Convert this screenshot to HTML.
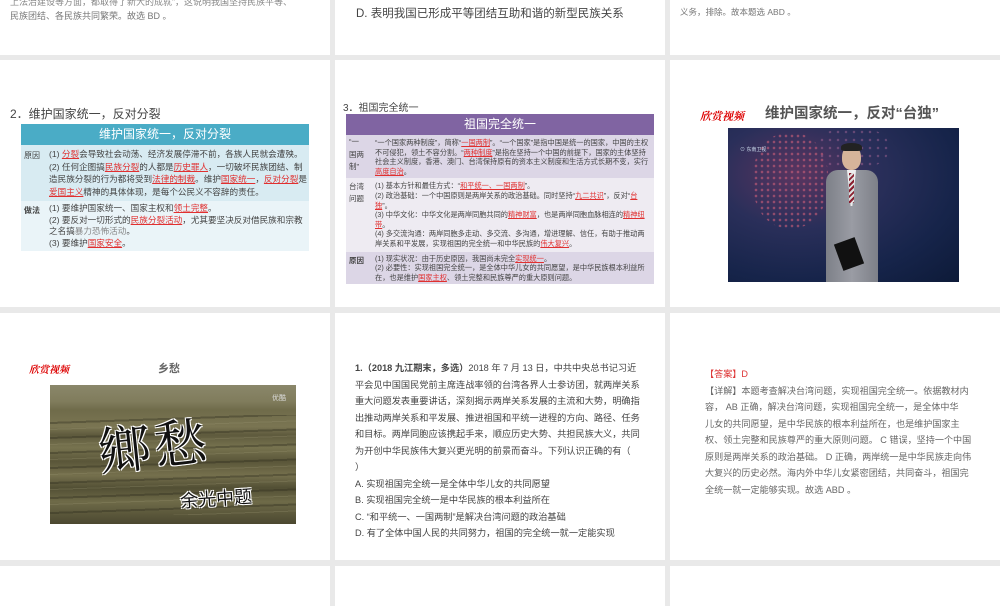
<!DOCTYPE html>
<html><head><meta charset="utf-8">
<style>
*{margin:0;padding:0;box-sizing:border-box}
body{width:1000px;height:600px;background:#e9e9e9;position:relative;overflow:hidden;font-family:"Liberation Sans","Noto Sans CJK SC",sans-serif;color:#444}
.s{position:absolute;background:#fff;overflow:hidden}
.a{position:absolute;white-space:nowrap}
.u{color:#e03030;text-decoration:underline}
table{border-collapse:collapse;width:100%}
td{vertical-align:top;color:#444;padding:1px 3px}
.red{color:#d00;font-family:"Liberation Serif","Noto Serif CJK SC",serif;font-weight:bold;font-style:italic}
</style></head><body>

<!-- row 1 -->
<div class="s" style="left:0;top:0;width:330px;height:55px">
 <div class="a" style="left:10px;top:-5px;font-size:9px;color:#888">上法治建设等方面，都取得了新大的成就”，这说明我国坚持民族平等、</div>
 <div class="a" style="left:10px;top:9px;font-size:9px;color:#777">民族团结、各民族共同繁荣。故选 BD 。</div>
</div>
<div class="s" style="left:335px;top:0;width:330px;height:55px">
 <div class="a" style="left:21px;top:5px;font-size:11.5px;color:#444">D. 表明我国已形成平等团结互助和谐的新型民族关系</div>
</div>
<div class="s" style="left:670px;top:0;width:330px;height:55px">
 <div class="a" style="left:10px;top:6px;font-size:8.5px;color:#777">义务，排除。故本题选 ABD 。</div>
</div>

<!-- row 2 col 1 -->
<div class="s" style="left:0;top:60px;width:330px;height:247px">
 <div class="a" style="left:10px;top:45px;font-size:12px;color:#444">2．维护国家统一，反对分裂</div>
 <div style="position:absolute;left:21px;top:64px;width:288px">
  <div style="background:#4aacc6;color:#fff;text-align:center;font-size:12px;height:21px;line-height:21px">维护国家统一，反对分裂</div>
  <table>
   <tr style="background:#d8ebf2"><td style="width:26px;font-size:8px;line-height:11px;padding-top:5px">原因</td><td style="font-size:8.6px;line-height:12.6px;padding:3px 2px 3px 2px">(1) <span class="u">分裂</span>会导致社会动荡、经济发展停滞不前，各族人民就会遭殃。<br>(2) 任何企图搞<span class="u">民族分裂</span>的人都是<span class="u">历史罪人</span>，一切破坏民族团结、制造民族分裂的行为都将受到<span class="u">法律的制裁</span>。维护<span class="u">国家统一</span>，<span class="u">反对分裂</span>是<span class="u">爱国主义</span>精神的具体体现，是每个公民义不容辞的责任。</td></tr>
   <tr style="background:#eaf4f8"><td style="font-weight:bold;font-size:8px;line-height:11px;padding-top:4px">做法</td><td style="font-size:8.6px;line-height:11.5px;padding:2px 2px 2px 2px">(1) 要维护国家统一、国家主权和<span class="u">领土完整</span>。<br>(2) 要反对一切形式的<span class="u">民族分裂活动</span>，尤其要坚决反对借民族和宗教之名搞<span style="color:#888">暴力恐怖活动</span>。<br>(3) 要维护<span class="u">国家安全</span>。</td></tr>
  </table>
 </div>
</div>

<!-- row 2 col 2 -->
<div class="s" style="left:335px;top:60px;width:330px;height:247px">
 <div class="a" style="left:8px;top:39px;font-size:10px;color:#444">3．祖国完全统一</div>
 <div style="position:absolute;left:11px;top:54px;width:308px">
  <div style="background:#8064a2;color:#fff;text-align:center;font-size:12px;height:21px;line-height:21px">祖国完全统一</div>
  <table>
   <tr style="background:#dcd6e6"><td style="width:26px;font-size:7.5px;line-height:12.5px">“一<br>国两<br>制”</td><td style="font-size:7.2px;line-height:9.6px;padding:3px 3px 2px">“一个国家两种制度”，简称“<span class="u">一国两制</span>”。“一个国家”是指中国是统一的国家，中国的主权不可侵犯，领土不容分割。“<span class="u">两种制度</span>”是指在坚持一个中国的前提下，国家的主体坚持社会主义制度，香港、澳门、台湾保持原有的资本主义制度和生活方式长期不变，实行<span class="u">高度自治</span>。</td></tr>
   <tr style="background:#eeebf2"><td style="font-size:7.5px;line-height:12px;padding-top:3px">台湾<br>问题</td><td style="font-size:7.2px;line-height:9.6px;padding:3px 3px 3px">(1) 基本方针和最佳方式：“<span class="u">和平统一、一国两制</span>”。<br>(2) 政治基础：一个中国原则是两岸关系的政治基础。同时坚持“<span class="u">九二共识</span>”，反对“<span class="u">台独</span>”。<br>(3) 中华文化：中华文化是两岸同胞共同的<span class="u">精神财富</span>，也是两岸同胞血脉相连的<span class="u">精神纽带</span>。<br>(4) 多交流沟通：两岸同胞多走动、多交流、多沟通，增进理解、信任，有助于推动两岸关系和平发展，实现祖国的完全统一和中华民族的<span class="u">伟大复兴</span>。</td></tr>
   <tr style="background:#dcd6e6"><td style="font-weight:bold;font-size:7.5px;padding-top:3px">原因</td><td style="font-size:7.2px;line-height:9.6px;padding:2px 3px 2px">(1) 现实状况：由于历史原因，我国尚未完全<span class="u">实现统一</span>。<br>(2) 必要性：实现祖国完全统一，是全体中华儿女的共同愿望，是中华民族根本利益所在，也是维护<span class="u">国家主权</span>、领土完整和民族尊严的重大原则问题。</td></tr>
  </table>
 </div>
</div>

<!-- row 2 col 3 -->
<div class="s" style="left:670px;top:60px;width:330px;height:247px">
 <div class="a red" style="left:30px;top:48px;font-size:11px">欣赏视频</div>
 <div class="a" style="left:95px;top:42px;font-size:14.5px;font-weight:bold;color:#555">维护国家统一，反对“台独”</div>
 <div style="position:absolute;left:58px;top:68px;width:231px;height:154px;background:radial-gradient(ellipse at 30% 30%,#5a3560 0%,#2a2f5a 35%,#16244a 70%,#0d1a38 100%);overflow:hidden">
  <div style="position:absolute;left:25px;top:5px;width:75px;height:95px;background:radial-gradient(circle,#d0607a 1px,transparent 1.6px) 0 0/6px 6px;opacity:.6;border-radius:45%"></div>
  <div style="position:absolute;left:90px;top:0;width:70px;height:40px;background:radial-gradient(circle,#b06a9a 1px,transparent 1.5px) 0 0/8px 8px;opacity:.45;border-radius:40%"></div>
  <div style="position:absolute;left:12px;top:18px;font-size:5px;color:#cde">⊙ 东南卫视</div>
  <div style="position:absolute;left:114px;top:18px;width:19px;height:24px;border-radius:45%;background:#d6b49a"></div>
  <div style="position:absolute;left:113px;top:15px;width:21px;height:8px;border-radius:50% 50% 20% 20%;background:#222"></div>
  <div style="position:absolute;left:98px;top:42px;width:52px;height:112px;border-radius:12px 12px 0 0;background:linear-gradient(90deg,#7d8088,#9a9ca4 50%,#7d8088)"></div>
  <div style="position:absolute;left:119px;top:42px;width:9px;height:36px;background:#eee;clip-path:polygon(0 0,100% 0,60% 100%,40% 100%)"></div>
  <div style="position:absolute;left:121px;top:45px;width:5px;height:30px;background:repeating-linear-gradient(135deg,#8a2030 0 2px,#ddd 2px 4px)"></div>
  <div style="position:absolute;left:110px;top:112px;width:22px;height:28px;background:#111;transform:rotate(-20deg)"></div>
 </div>
</div>

<!-- row 3 col 1 -->
<div class="s" style="left:0;top:313px;width:330px;height:247px">
 <div class="a red" style="left:29px;top:48px;font-size:10px">欣赏视频</div>
 <div class="a" style="left:158px;top:47px;font-size:11px;font-weight:bold;color:#666">乡愁</div>
 <div style="position:absolute;left:50px;top:72px;width:246px;height:139px;background:linear-gradient(#8a876a 0,#807c5c 12%,#6f6b4a 18%,#7a7552 30%,#5e5a3d 36%,#77734f 45%,#5a5639 55%,#75704d 65%,#524f34 74%,#6e6a48 84%,#4b4830 100%);overflow:hidden">
  <div style="position:absolute;left:0;top:30px;width:246px;height:100px;background:repeating-linear-gradient(178deg,transparent 0 7px,rgba(40,38,25,.35) 7px 9px,transparent 9px 14px,rgba(160,155,120,.25) 14px 15px);"></div>
  <div style="position:absolute;right:10px;top:8px;font-size:7px;color:#ddd">优酷</div>
  <div style="position:absolute;left:48px;top:20px;font-size:52px;font-family:'Noto Serif CJK SC',serif;color:#111;letter-spacing:4px;transform:rotate(-6deg);text-shadow:1px 1px 0 #fff,-1px -1px 0 #fff,1px -1px 0 #fff,-1px 1px 0 #fff">鄉愁</div>
  <div style="position:absolute;left:130px;top:100px;font-size:18px;color:#111;transform:rotate(-4deg);text-shadow:1px 1px 0 #fff,-1px -1px 0 #fff,1px -1px 0 #fff,-1px 1px 0 #fff">余光中题</div>
 </div>
</div>

<!-- row 3 col 2 -->
<div class="s" style="left:335px;top:313px;width:330px;height:247px;color:#444">
 <div style="position:absolute;left:20px;top:47px;width:286px;line-height:16.5px;font-size:9.2px"><b>1.（2018 九江期末，多选）</b>2018 年 7 月 13 日，中共中央总书记习近平会见中国国民党前主席连战率领的台湾各界人士参访团，就两岸关系重大问题发表重要讲话，深刻揭示两岸关系发展的主流和大势，明确指出推动两岸关系和平发展、推进祖国和平统一进程的方向、路径、任务和目标。两岸同胞应该携起手来，顺应历史大势、共担民族大义，共同为开创中华民族伟大复兴更光明的前景而奋斗。下列认识正确的有（<br>）<br>A. 实现祖国完全统一是全体中华儿女的共同愿望<br>B. 实现祖国完全统一是中华民族的根本利益所在<br>C. “和平统一、一国两制”是解决台湾问题的政治基础<br>D. 有了全体中国人民的共同努力，祖国的完全统一就一定能实现</div>
</div>

<!-- row 3 col 3 -->
<div class="s" style="left:670px;top:313px;width:330px;height:247px">
 <div style="position:absolute;left:35px;top:53px;width:268px;line-height:16.5px;font-size:9.1px;color:#666"><span style="color:#d33">【答案】D</span><br>【详解】本题考查解决台湾问题，实现祖国完全统一。依据教材内容， AB 正确，解决台湾问题，实现祖国完全统一，是全体中华<br>儿女的共同愿望，是中华民族的根本利益所在，也是维护国家主权、领土完整和民族尊严的重大原则问题。 C 错误，坚持一个中国原则是两岸关系的政治基础。 D 正确，两岸统一是中华民族走向伟大复兴的历史必然。海内外中华儿女紧密团结，共同奋斗，祖国完全统一就一定能够实现。故选 ABD 。</div>
</div>

<!-- row 4 -->
<div class="s" style="left:0;top:566px;width:330px;height:40px"></div>
<div class="s" style="left:335px;top:566px;width:330px;height:40px"></div>
<div class="s" style="left:670px;top:566px;width:330px;height:40px"></div>
</body></html>
